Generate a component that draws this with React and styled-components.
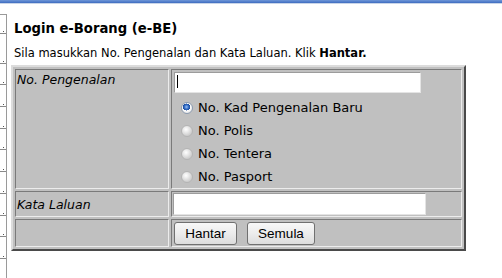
import React from "react";
import styled, { createGlobalStyle } from "styled-components";

const Global = createGlobalStyle`
  html, body { margin: 0; padding: 0; background: #fff; }
  body { font-family: "DejaVu Sans", Verdana, sans-serif; color: #000; }
`;

const Page = styled.div`
  width: 502px;
  height: 278px;
  overflow: hidden;
  display: flex;
  flex-direction: column;
`;

const TopBar = styled.div`
  height: 3px;
  background: linear-gradient(to bottom, #6f97d8, #3e6cc0);
  border-bottom: 1px solid #c9d5e8;
  flex: none;
`;

const Body = styled.div`
  display: flex;
  flex: 1;
`;

const Rail = styled.div`
  width: 6px;
  margin-top: 10px;
  border-top: 1px solid #9a9a9a;
  border-right: 1px solid #9a9a9a;
  display: flex;
  flex-direction: column;
  gap: 20.7px;
  padding-top: 18px;
  flex: none;
`;

const Tick = styled.div`
  height: 1px;
  background: #8a8a8a;
  position: relative;
  margin-top: ${(p) => p.$extra || 0}px;
  &::after {
    content: "";
    position: absolute;
    left: 3px;
    top: -2px;
    width: 1px;
    height: 1px;
    background: #555;
  }
`;

const Content = styled.div`
  padding-left: 4px;
  display: flex;
  flex-direction: column;
`;

const Title = styled.h1`
  margin: 16px 0 0 3px;
  font-size: 13.2px;
  font-weight: bold;
  line-height: 18px;
`;

const Intro = styled.p`
  margin: 8px 0 0 3px;
  font-size: 11.5px;
  line-height: 14px;
  b { font-weight: bold; }
`;

const Form = styled.table`
  margin-top: 5px;
  border-collapse: separate;
  border-spacing: 2px;
  background: #c0c0c0;
  border: 2px solid;
  border-color: #dcdcdc #4a4a4a #4a4a4a #dcdcdc;
`;

const Cell = styled.td`
  border: 1px solid;
  border-color: #7a7a7a #ececec #ececec #7a7a7a;
  padding: ${(p) => p.$pad || "1px"};
  vertical-align: ${(p) => p.$valign || "middle"};
  width: ${(p) => p.$w}px;
  height: ${(p) => p.$h}px;
  box-sizing: border-box;
`;

const Label = styled.span`
  font-style: italic;
  font-size: 12.5px;
  line-height: 17px;
  display: block;
`;

const TextField = styled.input`
  display: block;
  box-sizing: border-box;
  width: ${(p) => p.$w}px;
  height: ${(p) => p.$h}px;
  margin: 0;
  padding: 0 4px;
  border: 1px solid;
  border-color: #9c9c9c #e4e4e4 #e4e4e4 #9c9c9c;
  background: #fff;
  font: 13px "DejaVu Sans", sans-serif;
  outline: none;
`;

const Caret = styled.span`
  position: absolute;
  left: 3px;
  top: 3px;
  width: 1px;
  height: 13px;
  background: #000;
`;

const FieldWrap = styled.div`
  position: relative;
  margin-left: 1px;
`;

const RadioList = styled.div`
  display: flex;
  flex-direction: column;
  margin-top: 3px;
`;

const RadioRow = styled.label`
  display: flex;
  align-items: center;
  height: 23px;
  padding-left: 8px;
  font-size: 13px;
  gap: 5px;
`;

const RadioDot = styled.span`
  width: 12px;
  height: 12px;
  border-radius: 50%;
  box-sizing: border-box;
  flex: none;
  border: 1px solid ${(p) => (p.$on ? "#8c9bb0" : "#b4b4b4")};
  background: ${(p) =>
    p.$on
      ? "radial-gradient(circle at 45% 40%, #9cc3f2 0, #2f68c4 2.2px, #1d4f9e 3.4px, #ffffff 3.6px, #e8e8e8 6px)"
      : "radial-gradient(circle at 40% 35%, #ffffff 0, #ececec 2.5px, #cfcfcf 6px)"};
`;

const Buttons = styled.div`
  display: flex;
  gap: 10px;
  padding-left: 1px;
`;

const Button = styled.button`
  width: ${(p) => p.$w}px;
  height: 23px;
  margin: 0;
  padding: 0;
  border: 1px solid #707070;
  border-radius: 3px;
  background: linear-gradient(to bottom, #f8f8f8 0%, #ececec 50%, #dcdcdc 100%);
  font: 13.5px "Liberation Sans", Arial, sans-serif;
  color: #000;
`;

const ticks = [0, 8, 0, 0, 0, 0, 0, 0, 0, 0, 0];

export default function App() {
  return (
    <Page>
      <Global />
      <TopBar />
      <Body>
        <Rail>
          {ticks.map((e, i) => (
            <Tick key={i} $extra={e} />
          ))}
        </Rail>
        <Content>
          <Title>Login e-Borang (e-BE)</Title>
          <Intro>
            Sila masukkan No. Pengenalan dan Kata Laluan. Klik <b>Hantar.</b>
          </Intro>
          <Form>
            <tbody>
              <tr>
                <Cell $w={154} $h={120} $valign="top" $pad="1px">
                  <Label>No. Pengenalan</Label>
                </Cell>
                <Cell $w={291} $h={120} $valign="top" $pad="2px 2px 0 1px">
                  <FieldWrap>
                    <TextField $w={247} $h={21} defaultValue="" />
                    <Caret />
                  </FieldWrap>
                  <RadioList>
                    <RadioRow>
                      <RadioDot $on />
                      No. Kad Pengenalan Baru
                    </RadioRow>
                    <RadioRow>
                      <RadioDot />
                      No. Polis
                    </RadioRow>
                    <RadioRow>
                      <RadioDot />
                      No. Tentera
                    </RadioRow>
                    <RadioRow>
                      <RadioDot />
                      No. Pasport
                    </RadioRow>
                  </RadioList>
                </Cell>
              </tr>
              <tr>
                <Cell $w={154} $h={26}>
                  <Label>Kata Laluan</Label>
                </Cell>
                <Cell $w={291} $h={26} $pad="1px">
                  <TextField type="password" $w={253} $h={22} />
                </Cell>
              </tr>
              <tr>
                <Cell $w={154} $h={28} />
                <Cell $w={291} $h={28} $pad="2px 1px 1px 1px">
                  <Buttons>
                    <Button $w={63}>Hantar</Button>
                    <Button $w={68}>Semula</Button>
                  </Buttons>
                </Cell>
              </tr>
            </tbody>
          </Form>
        </Content>
      </Body>
    </Page>
  );
}
